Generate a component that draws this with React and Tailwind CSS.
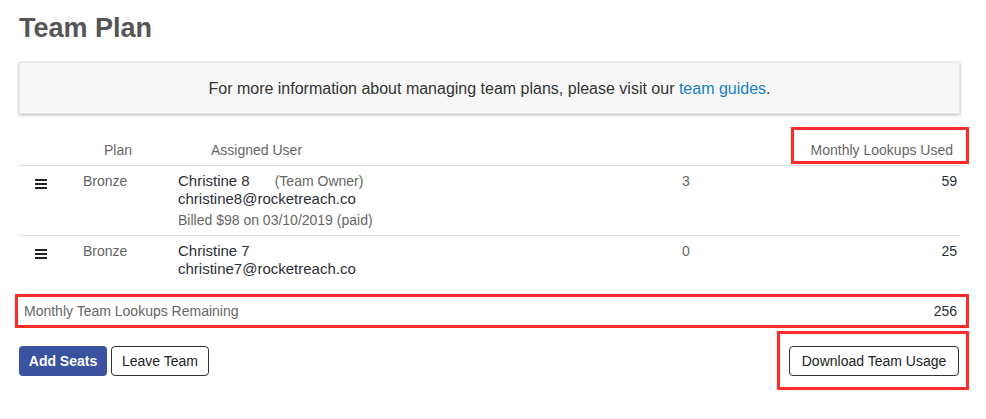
import React from 'react';

const users = [
  {
    plan: 'Bronze',
    name: 'Christine 8',
    owner: true,
    email: 'christine8@rocketreach.co',
    billed: 'Billed $98 on 03/10/2019 (paid)',
    count: 3,
    used: 59,
  },
  {
    plan: 'Bronze',
    name: 'Christine 7',
    owner: false,
    email: 'christine7@rocketreach.co',
    billed: null,
    count: 0,
    used: 25,
  },
];

function Hamburger() {
  return (
    <svg width="12" height="10" viewBox="0 0 12 10" className="block">
      <rect x="0" y="0" width="12" height="2" fill="#222" />
      <rect x="0" y="4" width="12" height="2" fill="#222" />
      <rect x="0" y="8" width="12" height="2" fill="#222" />
    </svg>
  );
}

export default function App() {
  return (
    <div className="min-h-screen bg-white pl-[19px] pt-[12px] font-['Liberation_Sans',Arial,sans-serif] text-[#333]">
      <div className="w-[950px]">
        <h1 className="text-[27px] leading-[33px] font-bold text-[#555]">Team Plan</h1>

        {/* info box */}
        <div className="mt-[17px] w-[941px] h-[52px] flex items-center justify-center pt-[2px] bg-[#f7f7f7] border border-[#e6e6e6] shadow-[0_1px_3px_rgba(0,0,0,0.3)] text-[16px] text-[#333]">
          <p>
            For more information about managing team plans, please visit our{' '}
            <a href="#" className="text-[#1581c5]">team guides</a>.
          </p>
        </div>

        {/* table */}
        <div className="mt-[16px] w-[941px]">
          <div className="relative flex border-b border-[#dcdcdc] pt-[10px] pb-[5px] text-[14px] leading-[20px] text-[#666]">
            <div className="w-[64px]" />
            <div className="w-[95px] pl-[21px]">Plan</div>
            <div className="w-[504px] pl-[33px]">Assigned User</div>
            <div className="flex-1 text-right pr-[7px]">Monthly Lookups Used</div>
            <div className="absolute top-[-3px] right-[-9px] w-[178px] h-[37px] border-[3px] border-[#ff2a2a]" />
          </div>

          {users.map((u, i) => (
            <div
              key={u.email}
              className={`flex pt-[6px] ${i === 0 ? 'pb-[6px] border-b border-[#dcdcdc]' : 'pb-[7px]'}`}
            >
              <div className="w-[64px] pl-[16px] pt-[7px]">
                <Hamburger />
              </div>
              <div className="w-[95px] text-[14px] leading-[18px] text-[#666]">{u.plan}</div>
              <div className="w-[504px]">
                <div className="text-[15px] leading-[18px] text-[#2b2f36]">
                  {u.name}
                  {u.owner && <span className="ml-[25px] text-[14px] text-[#666]">(Team Owner)</span>}
                </div>
                <div className="text-[15px] leading-[18px] text-[#2b2f36]">{u.email}</div>
                {u.billed && <div className="mt-[3px] text-[14px] leading-[18px] text-[#666]">{u.billed}</div>}
              </div>
              <div className="w-[100px] text-[14px] leading-[18px] text-[#666]">{u.count}</div>
              <div className="flex-1 text-right pr-[3px] text-[14px] leading-[18px] text-[#2b2f36]">{u.used}</div>
            </div>
          ))}
        </div>

        {/* remaining */}
        <div className="mt-[9px] -ml-[4px] w-[954px] h-[34px] border-[3px] border-[#ff2a2a] flex items-center justify-between pl-[6px] pr-[9px] text-[14px]">
          <span className="text-[#666]">Monthly Team Lookups Remaining</span>
          <span className="text-[#2b2f36]">256</span>
        </div>

        {/* footer */}
        <div className="mt-[3px] flex items-center justify-between">
          <div className="flex gap-[4px] pt-[1px]">
            <button className="h-[30px] w-[88px] rounded-[4px] bg-[#3b52a0] text-white text-[14px] font-bold">Add Seats</button>
            <button className="h-[30px] w-[98px] rounded-[4px] border border-[#333] bg-white text-[#222] text-[14px]">Leave Team</button>
          </div>
          <div className="h-[59px] w-[192px] border-[3px] border-[#ff2a2a] flex items-center pl-[9px] pt-[1px]">
            <button className="h-[30px] w-[170px] rounded-[4px] border border-[#333] bg-white text-[#222] text-[14px]">Download Team Usage</button>
          </div>
        </div>
      </div>
    </div>
  );
}
